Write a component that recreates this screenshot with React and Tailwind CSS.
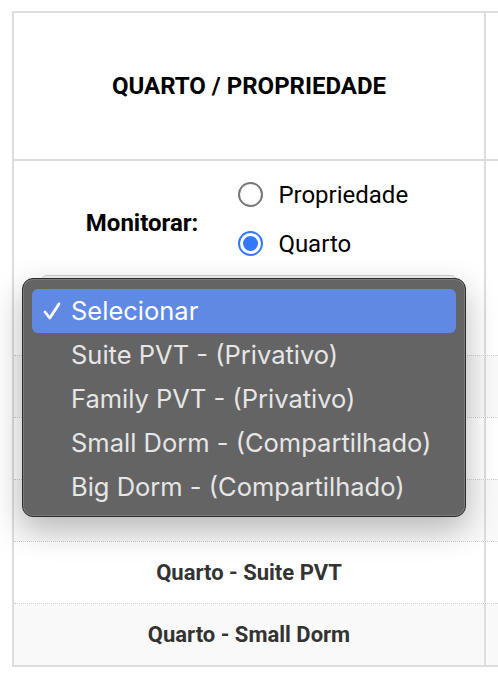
import React from 'react'

const rows = [
  '',
  '',
  'Propriedade',
  'Quarto - Suite PVT',
  'Quarto - Small Dorm',
]

const options = [
  'Selecionar',
  'Suite PVT - (Privativo)',
  'Family PVT - (Privativo)',
  'Small Dorm - (Compartilhado)',
  'Big Dorm - (Compartilhado)',
]

function Radio({ checked, label }) {
  return (
    <div className="flex items-center h-[49px] gap-[15px]">
      {checked ? (
        <div className="w-[25px] h-[25px] rounded-full border-2 border-[#3478f6] flex items-center justify-center bg-white">
          <div className="w-[15px] h-[15px] rounded-full bg-[#3478f6]" />
        </div>
      ) : (
        <div className="w-[25px] h-[25px] rounded-full border-2 border-[#777] bg-white" />
      )}
      <span className="text-[24px] text-black leading-none">{label}</span>
    </div>
  )
}

export default function App() {
  return (
    <div
      className="relative w-[498px] h-[678px] overflow-hidden bg-white"
      style={{ fontFamily: 'Roboto, "Liberation Sans", sans-serif' }}
    >
      <div className="pt-[11px] pl-[12px]">
        <div className="w-[700px] border-l-2 border-t-2 border-b-2 border-[#ddd]">
          {/* Header */}
          <div className="flex border-b-2 border-[#ddd]">
            <div className="w-[472px] h-[146px] border-r-2 border-[#ddd] flex items-center justify-center">
              <span className="text-[24px] font-bold text-black">QUARTO / PROPRIEDADE</span>
            </div>
            <div className="flex-1" />
          </div>

          {/* Monitorar + select */}
          <div className="flex">
            <div className="w-[472px] h-[194px] border-r-2 border-[#ddd] flex flex-col pt-[9px]">
              <div className="flex items-center justify-center gap-[40px] pr-[4px]">
                <span className="text-[24px] font-bold text-black pt-[8px]">Monitorar:</span>
                <div className="flex flex-col">
                  <Radio label="Propriedade" />
                  <Radio checked label="Quarto" />
                </div>
              </div>
              <div className="mt-[7px] mx-[27px] h-[56px] rounded-[6px] border border-[#cfcfcf] bg-[#f4f4f4]" />
            </div>
            <div className="flex-1" />
          </div>

          {/* Rows */}
          {rows.map((r, i) => (
            <div
              key={i}
              className={`flex border-t border-dotted border-[#cfcfcf] ${i % 2 === 0 ? 'bg-[#f9f9f9]' : 'bg-white'}`}
            >
              <div className={`w-[472px] h-[61px] border-r-2 border-[#ddd] flex items-center justify-center ${i === 2 ? 'pb-[12px]' : ''}`}>
                <span className="text-[22px] font-bold text-[#333]">{r}</span>
              </div>
              <div className="flex-1" />
            </div>
          ))}
        </div>
      </div>

      {/* Native select popup */}
      <div
        className="absolute left-[22px] top-[278px] w-[444px] h-[239px] rounded-[11px] bg-[#646464] border border-[#2c2c2c] py-[10px] px-[9px] shadow-[0_12px_32px_rgba(0,0,0,0.28)]"
        style={{ fontFamily: 'Inter, "Liberation Sans", sans-serif' }}
      >
        <div className="absolute inset-0 rounded-[10px] ring-1 ring-inset ring-white/15 pointer-events-none" />
        {options.map((o, i) => (
          <div
            key={i}
            className={`relative flex items-center pl-[39px] h-[44px] rounded-[6px] text-[25.5px] ${i === 0 ? 'bg-[#6089e4] text-white' : 'text-[#e6e6e6]'}`}
          >
            {i === 0 && (
              <svg className="absolute left-[11px] top-[13px]" width="18" height="18" viewBox="0 0 18 18" fill="none">
                <path d="M2 10 L6.8 16 L16 2" stroke="white" strokeWidth="2.8" strokeLinecap="round" strokeLinejoin="round" />
              </svg>
            )}
            {o}
          </div>
        ))}
      </div>
    </div>
  )
}
